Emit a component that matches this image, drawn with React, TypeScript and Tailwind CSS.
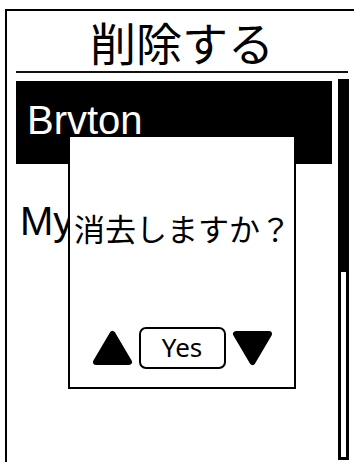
const Triangle = ({ down = false }: { down?: boolean }) => (
  <svg width="41" height="36" viewBox="0 0 41 36" className="block">
    <polygon
      points={down ? '4,4 37,4 20.5,32' : '20.5,4 37,32 4,32'}
      fill="black"
      stroke="black"
      strokeWidth="6"
      strokeLinejoin="round"
    />
  </svg>
);

export default function App() {
  return (
    <div className="relative h-[462px] w-[354px] overflow-hidden bg-white">
      <div className="ml-[5px] mt-[9px] h-[470px] w-[360px] border-l-2 border-t-2 border-black pl-[9px]">
        <div className="flex h-[60px] w-[332px] items-center justify-center font-['Noto_Sans_CJK_JP',sans-serif] text-[46px] leading-none text-black">
          削除する
        </div>
        <div className="h-[2px] w-[332px] bg-[#111]" />
        <div className="mt-[6px] flex gap-[6px]">
          <div className="w-[316px] pt-[2px] font-['Liberation_Sans',sans-serif]">
            <div className="flex h-[83px] items-center bg-black pl-[11px] pb-[6px] text-[40px] text-white">
              Brvton
            </div>
            <div className="flex h-[83px] items-center pl-[4px] pt-[30px] text-[40px] text-black">
              My
            </div>
          </div>
          <div className="flex h-[381px] w-[11px] flex-col border-[3px] border-black">
            <div className="h-[190px] bg-black" />
          </div>
        </div>
      </div>

      <div className="absolute left-[68px] top-[135px] flex h-[254px] w-[228px] flex-col items-center border-2 border-black bg-white">
        <div className="mt-[75px] w-full pl-[4px] font-['Noto_Sans_CJK_JP',sans-serif] text-[31px] leading-[31px] text-black">
          消去しますか？
        </div>
        <div className="mt-[84px] flex items-center gap-[6px]">
          <Triangle />
          <div className="flex h-[42px] w-[87px] items-center justify-center rounded-[7px] border-2 border-black pb-[2px] font-['Noto_Sans',sans-serif] text-[26px] leading-none text-black">
            Yes
          </div>
          <Triangle down />
        </div>
      </div>
    </div>
  );
}
